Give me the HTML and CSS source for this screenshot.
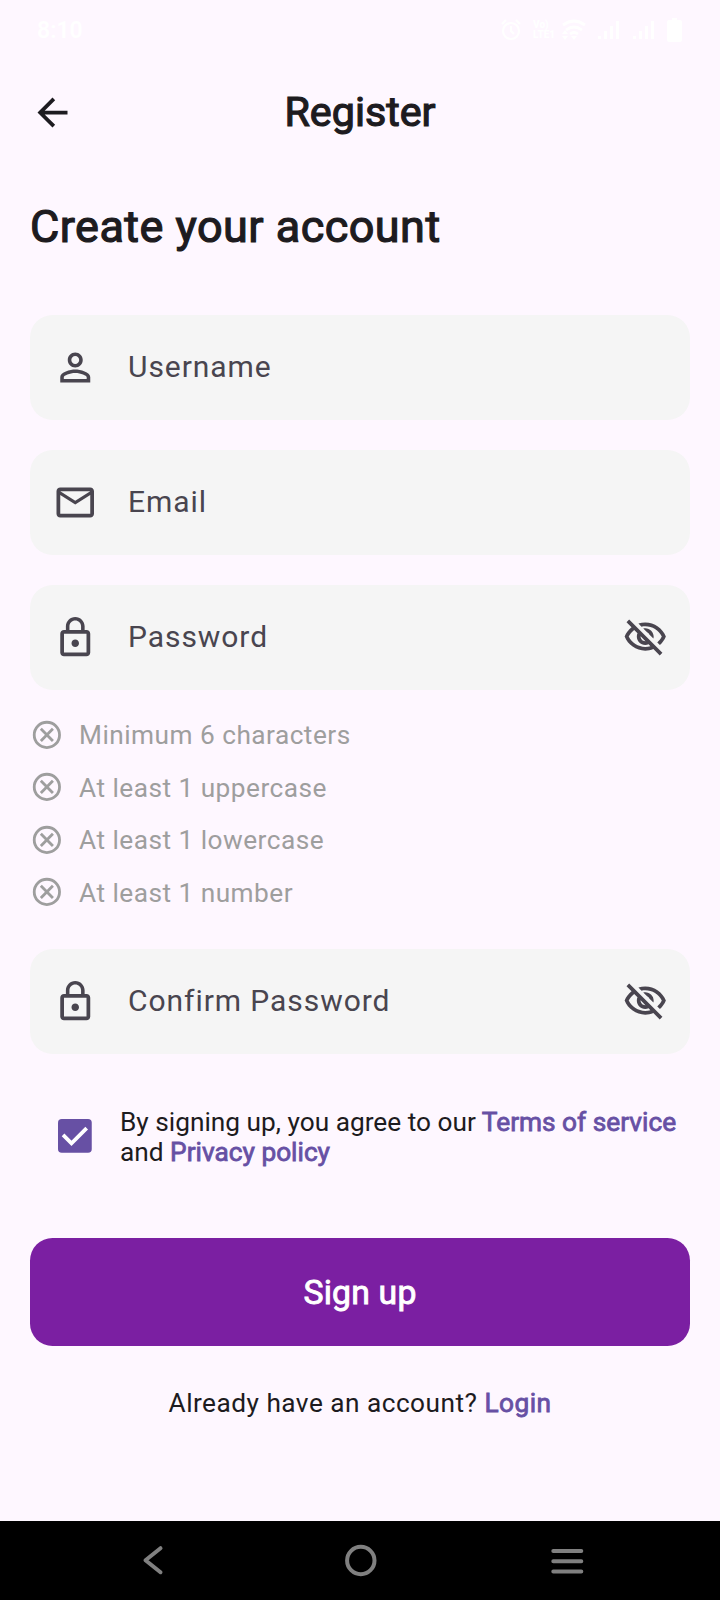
FILE: index.html
```html
<!DOCTYPE html>
<html lang="en">
<head>
<meta charset="utf-8">
<title>Register</title>
<link rel="stylesheet" href="styles.css">
</head>
<body>
<svg class="defs" width="0" height="0">
  <symbol id="lock" viewBox="0 0 24 24"><path d="M12 17c1.1 0 2-.9 2-2s-.9-2-2-2-2 .9-2 2 .9 2 2 2zm6-9h-1V6c0-2.76-2.24-5-5-5S7 3.24 7 6v2H6c-1.1 0-2 .9-2 2v10c0 1.1.9 2 2 2h12c1.100 0 2-.9 2-2V10c0-1.100-.9-2-2-2zM8.900 6c0-1.710 1.390-3.100 3.100-3.100s3.100 1.390 3.100 3.100v2H8.900V6zM18 20H6V10h12v10z"/></symbol>
  <symbol id="eye-off" viewBox="0 0 24 24"><path d="M12 6c3.790 0 7.170 2.130 8.820 5.500-.59 1.220-1.420 2.270-2.410 3.120l1.410 1.410c1.390-1.230 2.490-2.770 3.180-4.530C21.270 7.110 17 4 12 4c-1.270 0-2.490.2-3.640.57l1.650 1.650C10.660 6.090 11.320 6 12 6zm-1.070 1.140L13 9.210c.57.25 1.030.71 1.280 1.280l2.070 2.070c.08-.34.14-.7.14-1.070C16.500 9.010 14.480 7 12 7c-.37 0-.72.05-1.070.14zM2.010 3.870l2.680 2.680C3.060 7.830 1.770 9.530 1 11.500 2.730 15.890 7 19 12 19c1.520 0 2.980-.29 4.320-.82l3.420 3.420 1.410-1.410L3.420 2.450 2.010 3.870zm7.500 7.500l2.610 2.610c-.04.01-.08.02-.12.02-1.380 0-2.500-1.120-2.500-2.500 0-.05.01-.08.01-.13zm-3.400-3.400l1.750 1.750c-.23.55-.36 1.150-.36 1.780 0 2.480 2.020 4.500 4.500 4.500.63 0 1.230-.13 1.770-.36l.98.98c-.88.24-1.800.38-2.750.38-3.790 0-7.170-2.130-8.820-5.500.7-1.430 1.720-2.610 2.930-3.530z"/></symbol>
  <symbol id="cross" viewBox="0 0 24 24"><g fill="none" stroke="#9e9e9e" stroke-width="2"><circle cx="12" cy="12" r="9"/><path d="M7.700 7.700l8.600 8.600M16.300 7.700l-8.600 8.600"/></g></symbol>
  <symbol id="signal" viewBox="0 0 22 20"><path d="M0 16h3v3H0zM6 11h3v8H6zM12 6h3v13h-3zM18 1h3v18h-3z"/></symbol>
</svg>
<div class="screen">
  <div class="status">
    <span class="time">8:10</span>
    <div class="status-icons">
      <svg class="alarm" viewBox="0 0 20 22" width="20" height="22"><g fill="none" stroke="#fff" stroke-width="2.200"><circle cx="10" cy="12" r="8"/><path d="M10 7v5l3 3M1 5l4-4M19 5l-4-4"/></g></svg>
      <span class="volte"><span>Vo)</span><span>LTE1</span></span>
      <svg class="wifi" viewBox="0 0 24 22" width="24" height="22"><g fill="none" stroke="#fff" stroke-width="2.800"><path d="M1 6Q12-2 23 6M4 11q8-6 16 0M8 15q4-3 8 0"/></g><path d="M9 17h6l-3 4zM0 15l3-4 3 4zM0 17h6l-3 4z" fill="#fff"/></svg>
      <svg class="bars" width="22" height="20"><use href="#signal"/></svg>
      <svg class="bars" width="22" height="20"><use href="#signal"/></svg>
      <svg class="battery" viewBox="0 0 15 24" width="15" height="24"><path d="M5 0h5v2h3a2 2 0 0 1 2 2v18a2 2 0 0 1-2 2H2a2 2 0 0 1-2-2V4a2 2 0 0 1 2-2h3z" fill="#fff"/></svg>
    </div>
  </div>
  <header class="appbar">
    <svg class="icon back" viewBox="0 0 24 24"><path d="M20 11H7.830l5.590-5.590L12 4l-8 8 8 8 1.410-1.410L7.830 13H20v-2z"/></svg>
    <h1 class="title">Register</h1>
  </header>
  <main class="content">
    <h2 class="heading">Create your account</h2>
    <div class="fields">
      <div class="field">
        <svg class="icon" viewBox="0 0 24 24"><path d="M12 5.900c1.160 0 2.100.94 2.100 2.100s-.94 2.100-2.100 2.100S9.900 9.160 9.900 8s.94-2.100 2.100-2.100m0 9c2.970 0 6.100 1.460 6.100 2.100v1.100H5.900V17c0-.64 3.130-2.100 6.100-2.100M12 4C9.790 4 8 5.790 8 8s1.790 4 4 4 4-1.790 4-4-1.790-4-4-4zm0 9c-2.670 0-8 1.340-8 4v3h16v-3c0-2.660-5.330-4-8-4z"/></svg>
        <span class="label">Username</span>
      </div>
      <div class="field">
        <svg class="icon" viewBox="0 0 24 24"><path d="M20 4H4c-1.100 0-2 .9-2 2v12c0 1.100.9 2 2 2h16c1.100 0 2-.9 2-2V6c0-1.100-.9-2-2-2zm0 14H4V8l8 5 8-5v10zM12 11L4 6h16l-8 5z"/></svg>
        <span class="label">Email</span>
      </div>
      <div class="field">
        <svg class="icon"><use href="#lock"/></svg>
        <span class="label">Password</span>
        <svg class="icon"><use href="#eye-off"/></svg>
      </div>
    </div>
    <ul class="rules">
      <li class="rule"><svg class="rule-icon"><use href="#cross"/></svg><span>Minimum 6 characters</span></li>
      <li class="rule"><svg class="rule-icon"><use href="#cross"/></svg><span>At least 1 uppercase</span></li>
      <li class="rule"><svg class="rule-icon"><use href="#cross"/></svg><span>At least 1 lowercase</span></li>
      <li class="rule"><svg class="rule-icon"><use href="#cross"/></svg><span>At least 1 number</span></li>
    </ul>
    <div class="field">
      <svg class="icon"><use href="#lock"/></svg>
      <span class="label">Confirm Password</span>
      <svg class="icon"><use href="#eye-off"/></svg>
    </div>
    <div class="terms">
      <svg class="checkbox" viewBox="0 0 18 18"><rect width="18" height="18" rx="2" fill="#6750a4"/><path d="M2.700 8.500L7.200 13l8.100-8.100" fill="none" stroke="#fff" stroke-width="2"/></svg>
      <p class="terms-text">By signing up, you agree to our <a class="link">Terms of service</a><br>and <a class="link">Privacy policy</a></p>
    </div>
    <button class="signup">Sign up</button>
    <p class="login">Already have an account? <a class="link">Login</a></p>
  </main>
  <nav class="navbar">
    <svg viewBox="0 0 40 40" width="40" height="40"><path d="M27.500 8.200L12.500 20.200l15 12"/></svg>
    <svg viewBox="0 0 40 40" width="40" height="40"><circle cx="19.800" cy="20.500" r="13.700"/></svg>
    <svg viewBox="0 0 40 40" width="40" height="40"><path d="M5.300 11h28M5.300 21.200h28M5.300 31.500h28"/></svg>
  </nav>
</div>
</body>
</html>
```
FILE: styles.css
```css
* { box-sizing: border-box; }
body { margin: 0; background: #fef7ff; }
.defs { display: block; position: absolute; }
.screen {
  display: flex;
  flex-direction: column;
  width: 720px;
  height: 1600px;
  background: #fef7ff;
  color: #1d1b20;
  font-family: Roboto, sans-serif;
}
.status {
  display: flex;
  justify-content: space-between;
  align-items: center;
  height: 60px;
  padding: 0 38px 0 37px;
  color: #fff;
}
.time { font-size: 23px; font-weight: 600; line-height: 28px; padding-top: 2px; }
.status-icons { display: flex; align-items: center; fill: #fff; }
.volte { display: flex; flex-direction: column; width: 24px; margin: 0 5px 0 12px; font-size: 10px; font-weight: 900; line-height: 10px; }
.wifi { margin-right: 12px; }
.bars { margin-right: 13px; }
.bars + .battery { margin-left: -1px; }
.appbar {
  display: grid;
  grid-template-columns: 105px 1fr 105px;
  align-items: center;
  height: 105px;
}
.icon { flex: none; width: 45px; height: 45px; fill: #49454f; }
.back { margin-left: 30px; fill: #1d1b20; }
.title {
  margin: 0;
  padding-bottom: 2px;
  text-align: center;
  font-size: 41.25px;
  font-weight: 400;
  -webkit-text-stroke: 1.200px;
}
.content { flex: 1; padding: 32px 30px 0; }
.heading {
  margin: 0 0 58px;
  font-size: 45px;
  line-height: 60px;
  font-weight: 400;
  letter-spacing: 0.470px;
  -webkit-text-stroke: 1.200px;
}
.fields { display: grid; gap: 30px; }
.field {
  display: flex;
  align-items: center;
  height: 105px;
  padding: 0 22px;
  border-radius: 22.500px;
  background: #f5f5f5;
}
.field .icon { padding-left: 0.500px; width: 46px; }
.label { flex: 1; margin-left: 30px; padding-bottom: 2px; font-size: 30px; letter-spacing: 0.940px; line-height: 45px; color: #49454f; }
.rules { margin: 18.750px 0 30px; padding: 0; list-style: none; }
.rule {
  display: flex;
  align-items: center;
  gap: 15.250px;
  height: 52.500px;
  font-size: 26.250px;
  letter-spacing: 0.470px;
  color: #9e9e9e;
}
.rule-icon { width: 33.750px; height: 33.750px; margin-bottom: 0.500px; }
.terms { display: flex; align-items: center; margin-top: 51px; padding-left: 28px; }
.checkbox { flex: none; width: 33.750px; height: 33.750px; }
.terms-text { margin: 0 0 0 28.250px; padding-top: 2px; font-size: 26.250px; line-height: 30px; white-space: nowrap; }
.link { color: #6750a4; -webkit-text-stroke: 0.800px; }
.signup {
  display: block;
  width: 100%;
  height: 108.500px;
  margin: 71px 0 0;
  border: 0;
  border-radius: 22.500px;
  background: #7b1fa2;
  color: #fff;
  font: 400 33.750px Roboto, sans-serif;
  letter-spacing: 0.190px;
  -webkit-text-stroke: 0.900px;
}
.login { margin: 39px 0 0; text-align: center; font-size: 26.250px; line-height: 37.500px; letter-spacing: 0.470px; }
.navbar {
  display: flex;
  justify-content: space-between;
  align-items: center;
  height: 79px;
  padding: 0 132px 1px 133px;
  background: #000;
  fill: none;
  stroke: #808080;
  stroke-width: 4;
  stroke-linecap: round;
  stroke-linejoin: round;
}
```
